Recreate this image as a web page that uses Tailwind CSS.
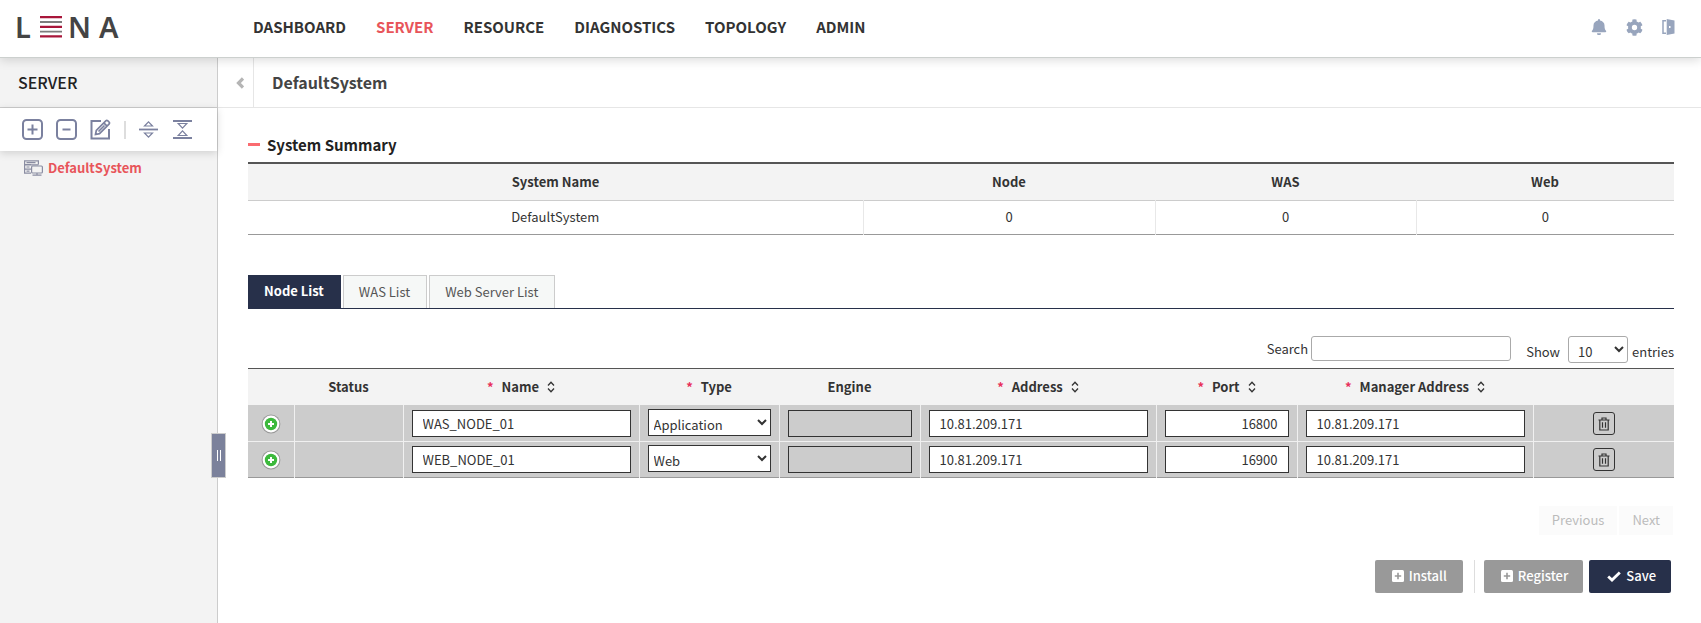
<!DOCTYPE html>
<html lang="en">
<head>
<meta charset="utf-8">
<meta name="viewport" content="width=device-width, initial-scale=1">
<title>LENA - Server</title>
<script src="https://cdn.jsdelivr.net/npm/@tailwindcss/browser@4"></script>
</head>
<body class="flex min-h-screen flex-col bg-white font-['Noto_Sans_CJK_KR','Noto_Sans',sans-serif] text-[13px] leading-5 text-[#333]">
<svg class="hidden" aria-hidden="true">
  <symbol id="sort" viewBox="0 0 8 12"><path d="M1 4.5 4 1.2 7 4.5M1 7.5 4 10.8 7 7.5" fill="none" stroke="currentColor" stroke-width="1.3"/></symbol>
  <symbol id="trash" viewBox="0 0 12 14"><path d="M.5 3h11M4 3V1h4v2M1.8 3v10h8.4V3M4.5 5.2v5.6M7.5 5.2v5.6" fill="none" stroke="currentColor" stroke-width="1.2"/></symbol>
  <symbol id="add" viewBox="0 0 20 20"><circle cx="10" cy="10" r="9.4" fill="#999"/><circle cx="10" cy="10" r="8.4" fill="#fff"/><circle cx="10" cy="10" r="6.2" fill="#3cb93c"/><path d="M10 7v6M7 10h6" stroke="#fff" stroke-width="2"/></symbol>
  <symbol id="plusbox" viewBox="0 0 12 12"><rect width="12" height="12" rx="1.5" fill="#fff"/><path d="M6 2.8v6.4M2.8 6h6.4" stroke="#999" stroke-width="1.6"/></symbol>
</svg>

<header class="relative z-20 flex h-[58px] items-center border-b border-[#ccd0ce] bg-white pr-[26px] pb-[3px] pl-[15px] shadow-[0_2px_10px_rgba(0,0,0,0.15)]">
  <a href="#" aria-label="LENA" class="flex w-[238px] items-center font-['Noto_Sans',sans-serif] text-[29px] leading-8 font-semibold text-[#444]">
    <span class="w-[25px]">L</span>
    <svg class="w-[22px]" height="22" viewBox="0 0 22 22" aria-hidden="true"><path d="M0 1.2h22M0 10.8h22M0 20.4h22" stroke="#a8163a" stroke-width="2.2"/><path d="M0 6h22M0 15.6h22" stroke="#7d7d7d" stroke-width="1.8"/></svg>
    <span class="ml-[6px] w-[31px]">N</span>
    <span>A</span>
  </a>
  <nav class="flex flex-1 gap-[30px] text-[15px] leading-6 font-bold text-[#333]">
    <a href="#">DASHBOARD</a>
    <a href="#" class="text-[#e8555a]" aria-current="page">SERVER</a>
    <a href="#">RESOURCE</a>
    <a href="#">DIAGNOSTICS</a>
    <a href="#">TOPOLOGY</a>
    <a href="#">ADMIN</a>
  </nav>
  <div class="flex items-center gap-[19px] text-[#98a5bd]">
    <button aria-label="Notifications"><svg class="block" width="16" height="16" viewBox="0 0 16 16" fill="currentColor"><path d="M8 0a1 1 0 0 1 1 1v.5c2.600.5 4.500 2.400 4.500 4.800 0 3.500.6 4.500 1.500 5.500.5.600.2 1.500-.700 1.500H1.700c-.9 0-1.200-.9-.7-1.500.9-1 1.500-2 1.500-5.500C2.500 3.900 4.400 2 7 1.500V1a1 1 0 0 1 1-1zM6 14.200h4a2 2 0 0 1-4 0z"/></svg></button>
    <button aria-label="Settings"><svg class="block" width="17" height="17" viewBox="0 0 512 512" fill="currentColor"><path d="M487 316l-43-25a194 194 0 0 0 0-70l43-25c5-3 7-9 6-14a250 250 0 0 0-55-95c-4-4-10-5-15-2l-43 24a192 192 0 0 0-61-35V25c0-6-4-11-9-12a251 251 0 0 0-110 0c-5 1-9 6-9 12v49a194 194 0 0 0-61 35L87 85c-5-3-11-2-15 2a249 249 0 0 0-55 95c-2 5 1 11 6 14l43 25a194 194 0 0 0 0 70l-43 25c-5 3-7 9-6 14a250 250 0 0 0 55 95c4 4 10 5 15 2l43-24a192 192 0 0 0 61 35v49c0 6 4 11 9 12a251 251 0 0 0 110 0c5-1 9-6 9-12v-49a194 194 0 0 0 61-35l43 24c5 3 11 2 15-2a249 249 0 0 0 55-95c1-5-1-11-6-14zM256 336a80 80 0 1 1 0-160 80 80 0 0 1 0 160z"/></svg></button>
    <button aria-label="Log out"><svg class="block" width="13" height="16" viewBox="0 0 13 16"><path d="M4 1.700H1v12.600h3" fill="none" stroke="currentColor" stroke-width="1.500"/><path fill="currentColor" fill-rule="evenodd" d="M4.700 0 12.500 1.500v13L4.700 16zM7 7v2h1.500V7z"/></svg></button>
  </div>
</header>

<div class="flex flex-1">
  <aside class="relative flex w-[218px] shrink-0 flex-col border-r border-[#ccc] bg-[#f3f3f3]">
    <h1 class="flex h-[50px] items-center border-b border-[#ccc] pb-[2px] pl-[18px] text-base leading-6 font-medium text-[#222]">SERVER</h1>
    <div class="flex h-[43px] items-center bg-white pl-[22px] text-[#7b819f] shadow-[0_2px_8px_rgba(0,0,0,0.15)]">
      <button aria-label="Add"><svg class="block" width="21" height="21" viewBox="0 0 21 21" fill="none" stroke="currentColor" stroke-width="2"><rect x="1" y="1" width="19" height="19" rx="3.500"/><path d="M10.500 5.500v10M5.500 10.500h10"/></svg></button>
      <button aria-label="Remove" class="ml-[13px]"><svg class="block" width="21" height="21" viewBox="0 0 21 21" fill="none" stroke="currentColor" stroke-width="2"><rect x="1" y="1" width="19" height="19" rx="3.500"/><path d="M6.500 10.500h8"/></svg></button>
      <button aria-label="Edit" class="ml-[13px]"><svg class="block" width="21" height="21" viewBox="0 0 21 21" fill="none" stroke="currentColor" stroke-width="2"><path d="M11 2H1.500v17.500H19V10"/><path stroke-width="1.700" d="M5.500 15.500 6.300 11.500 15.800 1.800Q16.800.9 17.900 1.900L19 3Q20 4.100 19 5.200L9.500 14.700zM13.800 3.800 17.100 7.100M8.500 12.500 14.500 6.500"/></svg></button>
      <span class="ml-[13px] h-[18px] w-[2px] bg-[#ddd]"></span>
      <button aria-label="Expand all" class="ml-[13px]"><svg class="block" width="19" height="19" viewBox="0 0 19 19" fill="none" stroke="currentColor" stroke-width="1.200"><path d="M0 9.500h19" stroke-width="1.800"/><path d="M5.500 6 9.500 1.800 13.500 6zM5.500 13 9.500 17.200 13.500 13z"/></svg></button>
      <button aria-label="Collapse all" class="ml-[15px]"><svg class="block" width="19" height="19" viewBox="0 0 19 19" fill="none" stroke="currentColor" stroke-width="1.200"><path d="M0 1h19M0 18h19" stroke-width="1.800"/><path d="M5.200 3.500H13.800L9.500 8.200zM5.200 15.500H13.800L9.500 10.800z"/></svg></button>
    </div>
    <a href="#" class="mt-[7px] flex items-center gap-[5px] pl-6 font-bold text-[#e8555a]">
      <svg width="19" height="16" viewBox="0 0 19 16" fill="none" stroke="#8a8da2" stroke-width="1.200"><path d="M7 4.600H.6V.8H14.400V4.600M7 9H.6V4.800H14.400M7 13.200H.6V9.200H7"/><path d="M2.500 2.700h9M2.500 7h3M2.500 11.200h3"/><rect x="7.600" y="6" width="10.800" height="7" rx="1" fill="#f3f3f3"/><path d="M8.500 15.200h9M13 13v2"/></svg>
      DefaultSystem
    </a>
    <button aria-label="Resize sidebar" class="absolute top-[375px] -right-[9px] z-10 flex h-[45px] w-[15px] items-center justify-center gap-[2px] border border-[#ccc] bg-[#7b819b]"><span class="h-[11px] w-px bg-white"></span><span class="h-[11px] w-px bg-white"></span></button>
  </aside>

  <main class="min-w-0 flex-1">
    <div class="flex h-[50px] items-stretch border-b border-[#e6e6e6]">
      <button aria-label="Back" class="flex w-9 items-center justify-center border-r border-[#e6e6e6] pl-2"><svg width="8" height="12" viewBox="0 0 8 12" fill="none" stroke="#b5b5b5" stroke-width="3.200"><path d="M7 1.500 2.500 6 7 10.500"/></svg></button>
      <h2 class="flex items-center pb-[2px] pl-[18px] text-base leading-6 font-bold text-[#444]">DefaultSystem</h2>
    </div>

    <div class="pr-[27px] pl-[30px]">
      <h3 class="flex h-[54px] items-center gap-[7px] pt-[19px] text-[15px] leading-6 font-bold text-[#222]"><span class="h-[3px] w-3 bg-[#fa6b70]"></span>System Summary</h3>
      <table class="w-full table-fixed border-collapse border-t-2 border-b border-t-[#555] border-b-[#999] text-center">
        <colgroup><col class="w-[615px]"><col class="w-[292px]"><col class="w-[261px]"><col class="w-[258px]"></colgroup>
        <thead><tr class="h-[37px] border-b border-[#ccc] bg-[#f3f3f3]"><th>System Name</th><th>Node</th><th>WAS</th><th>Web</th></tr></thead>
        <tbody><tr class="h-[34px] divide-x divide-[#e8e8e8]"><td>DefaultSystem</td><td>0</td><td>0</td><td>0</td></tr></tbody>
      </table>

      <div role="tablist" class="mt-10 flex h-[34px] gap-[2px] border-b border-[#27304a] text-[#555]">
        <button role="tab" aria-selected="true" class="bg-[#27304a] pr-[17px] pl-4 font-bold text-white">Node List</button>
        <button role="tab" class="border border-b-0 border-[#ccc] bg-[#f6f8f7] pr-4 pl-[15px]">WAS List</button>
        <button role="tab" class="border border-b-0 border-[#ccc] bg-[#f6f8f7] pr-4 pl-[15px]">Web Server List</button>
      </div>

      <div class="mt-[27px] flex h-8 items-start justify-end">
        <label for="search" class="pt-[3px]">Search</label>
        <input id="search" type="search" class="ml-[3px] h-[25px] w-[200px] rounded-[3px] border border-[#aaa] bg-white px-2 outline-none">
        <label for="count" class="ml-[15px] pt-[6px]">Show</label>
        <select id="count" class="mr-1 ml-2 h-[27px] w-[60px] rounded-[3px] border border-[#aaa] bg-white pt-1 pl-[5px]"><option>10</option><option>25</option></select>
        <span class="pt-[6px]">entries</span>
      </div>

      <table class="w-full table-fixed border-collapse border-t border-b border-t-[#555] border-b-[#999] text-center">
        <colgroup><col class="w-[46px]"><col class="w-[109px]"><col class="w-[236px]"><col class="w-[140px]"><col class="w-[141px]"><col class="w-[236px]"><col class="w-[141px]"><col class="w-[236px]"><col class="w-[141px]"></colgroup>
        <thead>
          <tr class="h-[37px] border-b border-[#ccc] bg-[#f3f3f3]">
            <th></th>
            <th>Status</th>
            <th><span class="mr-2 text-[#e8305a]">*</span>Name<svg class="ml-2 inline align-[-1px]" width="8" height="12"><use href="#sort"/></svg></th>
            <th><span class="mr-2 text-[#e8305a]">*</span>Type</th>
            <th>Engine</th>
            <th><span class="mr-2 text-[#e8305a]">*</span>Address<svg class="ml-2 inline align-[-1px]" width="8" height="12"><use href="#sort"/></svg></th>
            <th><span class="mr-2 text-[#e8305a]">*</span>Port<svg class="ml-2 inline align-[-1px]" width="8" height="12"><use href="#sort"/></svg></th>
            <th><span class="mr-2 text-[#e8305a]">*</span>Manager Address<svg class="ml-2 inline align-[-1px]" width="8" height="12"><use href="#sort"/></svg></th>
            <th></th>
          </tr>
        </thead>
        <tbody class="bg-[#ccc]">
          <tr class="h-9 divide-x divide-[#f0f0f0] border-b border-[#f0f0f0]">
            <td class="pt-[2px]"><button aria-label="Expand row" class="mx-auto block"><svg class="block" width="20" height="20"><use href="#add"/></svg></button></td>
            <td></td>
            <td class="px-2"><input aria-label="Name" value="WAS_NODE_01" class="block h-[27px] w-full border border-[#333] bg-white px-[10px]"></td>
            <td class="px-2"><select aria-label="Type" class="mb-[2px] block h-[27px] w-full border border-[#333] bg-white pt-1 pl-px"><option>Application</option><option>Web</option></select></td>
            <td class="px-2"><input aria-label="Engine" disabled class="block h-[27px] w-full border border-[#333] bg-[#ccc]"></td>
            <td class="px-2"><input aria-label="Address" value="10.81.209.171" class="block h-[27px] w-full border border-[#333] bg-white px-[10px]"></td>
            <td class="px-2"><input aria-label="Port" value="16800" class="block h-[27px] w-full border border-[#333] bg-white px-[10px] text-right"></td>
            <td class="px-2"><input aria-label="Manager address" value="10.81.209.171" class="block h-[27px] w-full border border-[#333] bg-white px-[10px]"></td>
            <td class="pt-px"><button aria-label="Delete" class="mx-auto flex h-[23px] w-[22px] items-center justify-center rounded-[3px] border border-[#333]"><svg width="12" height="14"><use href="#trash"/></svg></button></td>
          </tr>
          <tr class="h-9 divide-x divide-[#f0f0f0]">
            <td class="pt-[2px]"><button aria-label="Expand row" class="mx-auto block"><svg class="block" width="20" height="20"><use href="#add"/></svg></button></td>
            <td></td>
            <td class="px-2"><input aria-label="Name" value="WEB_NODE_01" class="block h-[27px] w-full border border-[#333] bg-white px-[10px]"></td>
            <td class="px-2"><select aria-label="Type" class="mb-[2px] block h-[27px] w-full border border-[#333] bg-white pt-1 pl-px"><option>Web</option><option>Application</option></select></td>
            <td class="px-2"><input aria-label="Engine" disabled class="block h-[27px] w-full border border-[#333] bg-[#ccc]"></td>
            <td class="px-2"><input aria-label="Address" value="10.81.209.171" class="block h-[27px] w-full border border-[#333] bg-white px-[10px]"></td>
            <td class="px-2"><input aria-label="Port" value="16900" class="block h-[27px] w-full border border-[#333] bg-white px-[10px] text-right"></td>
            <td class="px-2"><input aria-label="Manager address" value="10.81.209.171" class="block h-[27px] w-full border border-[#333] bg-white px-[10px]"></td>
            <td class="pt-px"><button aria-label="Delete" class="mx-auto flex h-[23px] w-[22px] items-center justify-center rounded-[3px] border border-[#333]"><svg width="12" height="14"><use href="#trash"/></svg></button></td>
          </tr>
        </tbody>
      </table>

      <div class="mt-7 flex justify-end gap-[2px] pr-px text-[#bbb]">
        <button class="h-[29px] bg-[#fbfbfb] px-[13px]">Previous</button>
        <button class="h-[29px] bg-[#fbfbfb] px-[13px]">Next</button>
      </div>

      <div class="mt-[25px] flex h-[33px] items-stretch justify-end pr-[3px] font-medium text-white">
        <button class="flex items-center gap-[5px] rounded-[2px] bg-[#999] pr-4 pl-[17px]"><svg width="12" height="12"><use href="#plusbox"/></svg>Install</button>
        <span class="mr-[9px] ml-[11px] w-px bg-[#ddd]"></span>
        <button class="flex items-center gap-[5px] rounded-[2px] bg-[#999] pr-[15px] pl-[17px]"><svg width="12" height="12"><use href="#plusbox"/></svg>Register</button>
        <button class="ml-[6px] flex items-center gap-[5px] rounded-[2px] bg-[#27304a] pr-[15px] pl-[18px]"><svg width="14" height="11" viewBox="0 0 14 11" fill="none" stroke="#fff" stroke-width="2.800"><path d="M1.200 5.400 5 9 12.800 1.400"/></svg>Save</button>
      </div>
    </div>
  </main>
</div>
</body>
</html>
